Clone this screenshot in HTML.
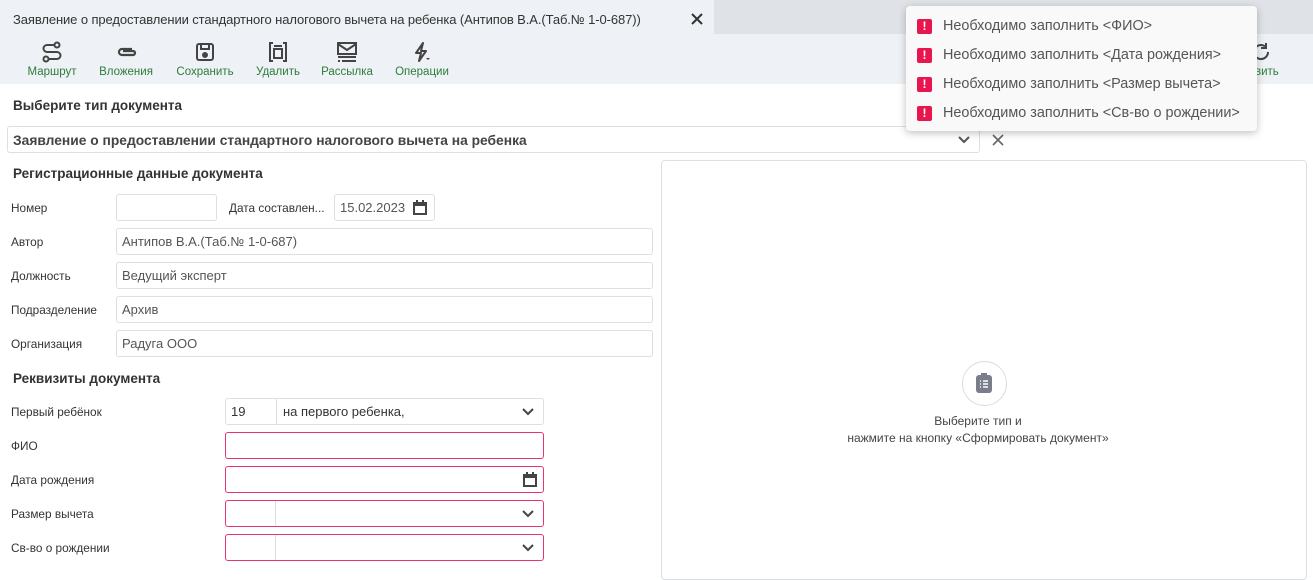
<!DOCTYPE html>
<html><head><meta charset="utf-8"><style>
*{box-sizing:border-box;margin:0;padding:0}
body{width:1313px;height:565px;overflow:hidden;background:#fff;font-family:"Liberation Sans","Noto Sans CJK SC",sans-serif;color:#333;position:relative}
.a{position:absolute}
.tabbar{left:0;top:0;width:1313px;height:34px;background:#dfe2e7}
.tab{left:0;top:0;width:714px;height:34px;background:#eef1f5;font-size:13px;color:#333;padding:12px 0 0 13px;letter-spacing:-0.1px}
.tb{left:0;top:34px;width:1313px;height:50px;background:#eef1f5}
.btn{top:41px;text-align:center;font-size:11.5px;color:#2e7d3a}
.btn svg{display:block;margin:0 auto 3px}
.h{font-size:13.5px;font-weight:bold;color:#333}
.lbl{font-size:11.8px;color:#333;left:11px}
.in{border:1px solid #dcdfe4;border-radius:3px;height:27px;font-size:13px;color:#555;padding:5px 0 0 5px;background:#fff}
.err{border:1px solid #e8356e}
.chev{position:absolute;right:9px;top:9px}
.pop{left:906px;top:6px;width:351px;height:125px;background:#f9f9f9;border-radius:4px;box-shadow:0 2px 8px rgba(0,0,0,.25)}
.pi{position:absolute;left:11px;font-size:14.4px;color:#555}
.pi b{display:inline-block;width:15px;height:15px;background:#e8154e;border-radius:2px;color:#fff;font-size:12px;text-align:center;line-height:15px;margin-right:11px;vertical-align:0px}
</style></head><body>
<div class="a tabbar"></div>
<div class="a tab">Заявление о предоставлении стандартного налогового вычета на ребенка (Антипов В.А.(Таб.№ 1-0-687))</div>
<svg class="a" style="left:691px;top:13px" width="12" height="12" viewBox="0 0 12 12"><path d="M1 1L11 11M11 1L1 11" stroke="#333" stroke-width="2"/></svg>
<div class="a tb"></div>
<div class="a btn" style="left:20px;width:64px"><svg width="22" height="22" viewBox="0 0 22 22" fill="none" stroke="#444" stroke-width="2"><circle cx="16" cy="4" r="2.5"/><circle cx="5" cy="18" r="2.5"/><path d="M13.5 4H6a3.5 3.5 0 0 0 0 7h10a3.5 3.5 0 0 1 0 7H7.5"/></svg>Маршрут</div>
<div class="a btn" style="left:94px;width:64px"><svg width="22" height="22" viewBox="0 0 22 22" fill="none" stroke="#444" stroke-width="2.2"><path d="M17 8H7a3 3 0 0 0 0 6h11a2 2 0 0 0 0-4H8"/></svg>Вложения</div>
<div class="a btn" style="left:170px;width:70px"><svg width="22" height="22" viewBox="0 0 22 22" fill="none" stroke="#444" stroke-width="2"><rect x="3" y="3" width="16" height="16" rx="2"/><path d="M7 3v5h8V3"/><circle cx="11" cy="14" r="2" fill="#444"/></svg>Сохранить</div>
<div class="a btn" style="left:248px;width:60px"><svg width="22" height="22" viewBox="0 0 22 22" fill="none" stroke="#444" stroke-width="2"><path d="M6 2H3v18h3M16 2h3v18h-3"/><rect x="7" y="8" width="8" height="9"/><path d="M7 5h8"/></svg>Удалить</div>
<div class="a btn" style="left:315px;width:64px"><svg width="22" height="22" viewBox="0 0 22 22" fill="none" stroke="#444" stroke-width="2"><rect x="2" y="2" width="18" height="11"/><path d="M2 3l9 6 9-6M2 16h18M6 20h14M2 20h2"/></svg>Рассылка</div>
<div class="a btn" style="left:388px;width:68px"><svg width="22" height="22" viewBox="0 0 22 22"><path d="M12 2L5 12h5l-2 8 7-10h-5z" fill="none" stroke="#444" stroke-width="2" stroke-linejoin="round"/><path d="M15 17h4l-2 2z" fill="#444"/></svg>Операции</div>
<svg class="a" style="left:1250px;top:41px" width="22" height="22" viewBox="0 0 22 22" fill="none" stroke="#444" stroke-width="2"><path d="M18 11a7 7 0 1 1-3-5.7"/><path d="M16 2v5h-5"/></svg>
<div class="a" style="left:1255px;top:66px;font-size:11.5px;color:#2e7d3a">вить</div>

<div class="a h" style="left:13px;top:98px">Выберите тип документа</div>
<div class="a in" style="left:7px;top:126px;width:973px;font-weight:bold;font-size:13.8px;color:#444;padding-top:6px">Заявление о предоставлении стандартного налогового вычета на ребенка<svg class="chev" width="12" height="8" viewBox="0 0 12 8"><path d="M1 1l5 5 5-5" stroke="#555" stroke-width="2" fill="none"/></svg></div>
<svg class="a" style="left:992px;top:134px" width="12" height="12" viewBox="0 0 12 12"><path d="M1 1L11 11M11 1L1 11" stroke="#666" stroke-width="1.6"/></svg>

<div class="a" style="left:661px;top:160px;width:646px;height:420px;border:1px solid #dcdfe4;border-radius:4px"></div>
<div class="a" style="left:962px;top:361px;width:45px;height:45px;border:1px solid #dcdce4;border-radius:50%"></div>
<svg class="a" style="left:974px;top:372px" width="20" height="22" viewBox="0 0 20 22"><rect x="2" y="3" width="16" height="18" rx="3" fill="#7a7d8c"/><rect x="7" y="1" width="6" height="3" fill="#7a7d8c"/><path d="M6 9h1M9 9h5M6 12h1M9 12h5M6 15h1M9 15h5" stroke="#fff" stroke-width="1.5"/></svg>
<div class="a" style="left:655px;top:413px;width:646px;text-align:center;font-size:12px;color:#444;line-height:17px">Выберите тип и<br>нажмите на кнопку «Сформировать документ»</div>

<div class="a h" style="left:13px;top:166px">Регистрационные данные документа</div>
<div class="a lbl" style="top:201px">Номер</div>
<div class="a in" style="left:116px;top:194px;width:101px"></div>
<div class="a lbl" style="left:229px;top:201px">Дата составлен...</div>
<div class="a in" style="left:334px;top:194px;width:101px">15.02.2023<svg style="position:absolute;right:7px;top:5px" width="14" height="15" viewBox="0 0 14 15"><rect x="1" y="3" width="12" height="11" fill="none" stroke="#444" stroke-width="2"/><path d="M1 5h12M4 0v3M10 0v3" stroke="#444" stroke-width="2"/></svg></div>
<div class="a lbl" style="top:235px">Автор</div>
<div class="a in" style="left:116px;top:228px;width:537px">Антипов В.А.(Таб.№ 1-0-687)</div>
<div class="a lbl" style="top:269px">Должность</div>
<div class="a in" style="left:116px;top:262px;width:537px">Ведущий эксперт</div>
<div class="a lbl" style="top:303px">Подразделение</div>
<div class="a in" style="left:116px;top:296px;width:537px">Архив</div>
<div class="a lbl" style="top:337px">Организация</div>
<div class="a in" style="left:116px;top:330px;width:537px">Радуга ООО</div>

<div class="a h" style="left:13px;top:371px">Реквизиты документа</div>
<div class="a lbl" style="top:405px">Первый ребёнок</div>
<div class="a in" style="left:225px;top:398px;width:319px;color:#333">19<span style="position:absolute;left:50px;top:0;height:25px;border-left:1px solid #dcdfe4"></span><span style="position:absolute;left:57px;top:5px">на первого ребенка,</span><svg class="chev" width="12" height="8" viewBox="0 0 12 8"><path d="M1 1l5 5 5-5" stroke="#444" stroke-width="2" fill="none"/></svg></div>
<div class="a lbl" style="top:439px">ФИО</div>
<div class="a in err" style="left:225px;top:432px;width:319px"></div>
<div class="a lbl" style="top:473px">Дата рождения</div>
<div class="a in err" style="left:225px;top:466px;width:319px"><svg style="position:absolute;right:6px;top:5px" width="14" height="15" viewBox="0 0 14 15"><rect x="1" y="3" width="12" height="11" fill="none" stroke="#444" stroke-width="2"/><path d="M1 5h12M4 0v3M10 0v3" stroke="#444" stroke-width="2"/></svg></div>
<div class="a lbl" style="top:507px">Размер вычета</div>
<div class="a in err" style="left:225px;top:500px;width:319px"><span style="position:absolute;left:49px;top:0;height:25px;border-left:1px solid #dcdfe4"></span><svg class="chev" width="12" height="8" viewBox="0 0 12 8"><path d="M1 1l5 5 5-5" stroke="#444" stroke-width="2" fill="none"/></svg></div>
<div class="a lbl" style="top:541px">Св-во о рождении</div>
<div class="a in err" style="left:225px;top:534px;width:319px"><span style="position:absolute;left:49px;top:0;height:25px;border-left:1px solid #dcdfe4"></span><svg class="chev" width="12" height="8" viewBox="0 0 12 8"><path d="M1 1l5 5 5-5" stroke="#444" stroke-width="2" fill="none"/></svg></div>

<div class="a pop">
<div class="pi" style="top:12px"><b>!</b>Необходимо заполнить &lt;ФИО&gt;</div>
<div class="pi" style="top:41px"><b>!</b>Необходимо заполнить &lt;Дата рождения&gt;</div>
<div class="pi" style="top:70px"><b>!</b>Необходимо заполнить &lt;Размер вычета&gt;</div>
<div class="pi" style="top:99px"><b>!</b>Необходимо заполнить &lt;Св-во о рождении&gt;</div>
</div>
</body></html>
